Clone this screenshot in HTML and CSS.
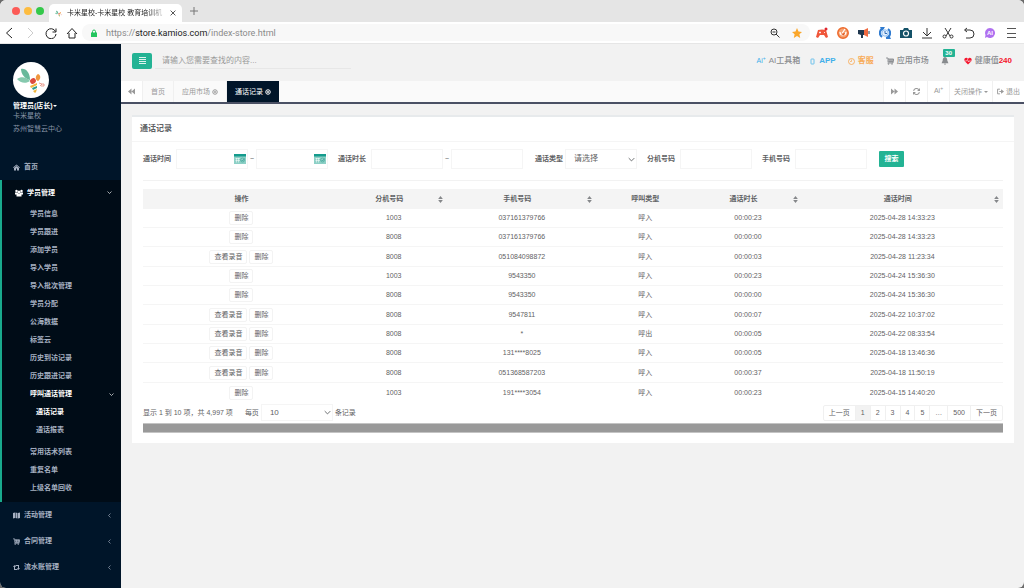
FILE: index.html
```html
<!DOCTYPE html>
<html lang="zh-CN">
<head>
  <meta charset="UTF-8" />
  <title>卡米星校-卡米星校 教育培训机构管理系统</title>
  <link rel="stylesheet" href="styles.css">
</head>
<body>

  <svg class="sprite" aria-hidden="true">
    <symbol id="bee" viewBox="0 0 36 36">
      <path d="M8 7c5-1 9 4 9 11C12 17 8 12 8 7z" fill="#68b99b"/>
      <path d="M4 17c4-3 10-2 13 2-4 3-10 2-13-2z" fill="#86c9ae"/>
      <path d="M25 12c3 1 3 5 0 7-3-1-3-5 0-7z" fill="#f0963c"/>
      <ellipse cx="20" cy="19" rx="3" ry="2.600" transform="rotate(-35 20 19)" fill="#dc4a3d"/>
      <path d="M17 24l7-3v2l-6 3z" fill="#f0b63c"/>
      <path d="M19 26l5-2v2l-4 2z" fill="#2e9c8c"/>
      <path d="M20 29l4-2-1 3-1 1z" fill="#f0b63c"/>
      <path d="M26 21l3 1-2 2M28 24h3v-2h-2" fill="none" stroke="#e58a7c" stroke-width=".8"/>
    </symbol>
    <symbol id="cart" viewBox="0 0 16 16">
      <path d="M0 2h4v8h10v2H3M4 4h11v5H5M8 4v5M12 4v5M4 6h11" fill="none" stroke="currentColor" stroke-width="1.800"/>
      <circle cx="5" cy="14" r="1.500" fill="currentColor"/><circle cx="12" cy="14" r="1.500" fill="currentColor"/>
    </symbol>
    <symbol id="sort" viewBox="0 0 8 12">
      <path d="M4 0l4 5H0zM4 12l4-5H0z" fill="#85878a"/>
    </symbol>
    <symbol id="chevron" viewBox="0 0 10 10">
      <path d="M1 3l4 4 4-4" fill="none" stroke="currentColor" stroke-width="1.300"/>
    </symbol>
    <symbol id="caret" viewBox="0 0 8 8">
      <path d="M0 2h8L4 6z" fill="currentColor"/>
    </symbol>
    <symbol id="close" viewBox="0 0 12 12">
      <circle cx="6" cy="6" r="4.500" fill="none" stroke="currentColor" stroke-width="2"/>
      <path d="M4 4l4 4M8 4l-4 4" stroke="currentColor" stroke-width="1.400"/>
    </symbol>
    <symbol id="calendar" viewBox="0 0 24 20">
      <path d="M0 0h24v20H0z" fill="#8dd0c6"/>
      <path d="M0 0h24v5H0z" fill="#159b8d"/>
      <path d="M3 9h9M3 13h9M5 8v9M9 8v9" stroke="#fff"/>
      <circle cx="17" cy="12" r="4" fill="none" stroke="#4aaa9e" stroke-width="1.400"/>
      <path d="M15 12l2 2 4-5" fill="none" stroke="#16877c"/>
    </symbol>
  </svg>

  <div class="window">

    <div class="tab-strip">
      <span class="light red"></span>
      <span class="light yellow"></span>
      <span class="light green"></span>
      <div class="browser-tab">
        <svg class="favicon"><use href="#bee"/></svg>
        <span class="browser-title">卡米星校-卡米星校 教育培训机</span>
        <button type="button" class="plain" aria-label="关闭标签页">
          <svg class="i6" viewBox="0 0 10 10"><path d="M1 1l8 8M9 1l-8 8" stroke="#444" stroke-width="1.500"/></svg>
        </button>
      </div>
      <button type="button" class="plain" aria-label="新标签页">
        <svg class="i8" viewBox="0 0 8 8"><path d="M4 0v8M0 4h8" stroke="#777"/></svg>
      </button>
    </div>

    <div class="toolbar">
      <div class="tools">
        <button type="button" class="plain" aria-label="后退"><svg class="i12" viewBox="0 0 12 12"><path d="M9 1L3.500 6 9 11" fill="none" stroke="#222"/></svg></button>
        <button type="button" class="plain" aria-label="前进"><svg class="i12" viewBox="0 0 12 12"><path d="M4 1l5 5-5 5" fill="none" stroke="#ccc"/></svg></button>
        <button type="button" class="plain" aria-label="刷新"><svg class="i12" viewBox="0 0 12 12"><path d="M10.500 4.500A5 5 0 1 0 11 7M11 1.500v3.500H7.500" fill="none" stroke="#222"/></svg></button>
        <button type="button" class="plain" aria-label="主页"><svg class="i12" viewBox="0 0 12 12"><path d="M1 7l5-5.500L11 7M3 6v5h6V6" fill="none" stroke="#222"/></svg></button>
      </div>
      <div class="address">
        <svg class="i8" viewBox="0 0 8 8"><path d="M2.500 4V2.500a1.500 1.500 0 0 1 3 0V4" fill="none" stroke="#22c55e"/><path d="M1 3.500h6V8H1z" fill="#22c55e"/></svg>
        <span class="url">https://<b>store.kamios.com</b>/index-store.html</span>
        <svg class="i10" viewBox="0 0 10 10"><circle cx="4" cy="4" r="3" fill="none" stroke="#333"/><path d="M6 6l3.500 3.500M2.500 4h3" stroke="#333"/></svg>
        <svg class="i10" viewBox="0 0 10 10"><path d="M5 0l1.500 3.500L10 4 7.400 6.300 8.200 10 5 8 1.800 10l.8-3.700L0 4l3.500-.5z" fill="#fba72b"/></svg>
      </div>
      <div class="tools">
        <svg class="i12" viewBox="0 0 12 12"><path d="M2 3q4-1 8 0l2 7-2 1-2-3H4l-2 3-2-1z" fill="#f0563a"/><circle cx="10" cy="2" r="1.500" fill="#e0262e"/><path d="M3 5.500h2M4 4.500v2M8 5.500h1" stroke="#fff" stroke-width=".8"/></svg>
        <svg class="i12" viewBox="0 0 12 12"><circle cx="6" cy="6" r="5.200" fill="#f6a373" stroke="#ee6a2c" stroke-width="1.500"/><path d="M3 5a3 3 0 1 0 6 0M5 6.500l3-4.500" fill="none" stroke="#fff" stroke-width="1.200"/><path d="M4 7l4-1-1 2.500z" fill="#e2571e"/></svg>
        <svg class="i12" viewBox="0 0 12 12"><path d="M0 3h6v5H5v3H3V8L0 7z" fill="#20384f"/><path d="M6 3l4-2v9L6 8z" fill="#f0693f"/><path d="M11 4v3" stroke="#20384f"/></svg>
        <svg class="i12" viewBox="0 0 12 12"><path d="M3 10A5 5 0 0 1 5 1M9 2a5 5 0 0 1-2 9" fill="none" stroke="#2f7bd0" stroke-width="2"/><path d="M1 0h5L3 4zM12 12H7l3-4z" fill="#2f7bd0"/><circle cx="6" cy="6" r="3.200" fill="#e4f0fc" stroke="#8bbcf0"/><path d="M6 4v2.500h2" fill="none" stroke="#2f6db8"/></svg>
        <svg class="i12" viewBox="0 0 12 12"><path d="M0 3h3l1-2h4l1 2h3v8H0z" fill="#145268"/><circle cx="6" cy="6.500" r="2.500" fill="none" stroke="#fff" stroke-width="1.200"/></svg>
        <svg class="i12" viewBox="0 0 12 12"><path d="M6 1v8M2 5l4 4 4-4M1 11h10" fill="none" stroke="#333"/></svg>
        <svg class="i12" viewBox="0 0 12 12"><path d="M3 1l5 8M9 1L4 9" stroke="#333"/><circle cx="2.500" cy="9.500" r="1.500" fill="none" stroke="#333"/><circle cx="9.500" cy="9.500" r="1.500" fill="none" stroke="#333"/></svg>
        <svg class="i12" viewBox="0 0 12 12"><path d="M4 1L1.500 3 4 5M2 3h5a4 4 0 0 1 0 8H3" fill="none" stroke="#333"/></svg>
        <svg class="i12" viewBox="0 0 12 12"><path d="M6 1a5 5 0 1 1-3 9l-2 1 .5-3A5 5 0 0 1 6 1z" fill="#b070f0"/><text x="6" y="8" text-anchor="middle" class="chat-label">AI</text></svg>
        <svg class="i12" viewBox="0 0 12 12"><path d="M2 1.500h9M2 6.500h9M2 10.500h9" stroke="#555"/></svg>
      </div>
    </div>

    <div class="page">

      <aside class="sidebar">
        <div class="profile">
          <svg class="avatar"><use href="#bee"/></svg>
          <a href="#" class="user">管理员(店长)<svg class="i4"><use href="#caret"/></svg></a>
          <span>卡米星校</span>
          <span class="campus">苏州智慧云中心</span>
        </div>
        <nav>
          <a href="#" class="item"><svg class="i7" viewBox="0 0 14 14"><path d="M7 1l7 6-1 1-6-5-6 5-1-1zM2 8l5-4 5 4v5H8V9H6v4H2z" fill="currentColor"/></svg>首页</a>
          <div class="section">
            <a href="#" class="item on"><svg class="i8" viewBox="0 0 16 16"><circle cx="3" cy="4" r="2.500" fill="currentColor"/><circle cx="13" cy="4" r="2.500" fill="currentColor"/><circle cx="8" cy="6" r="3" fill="currentColor"/><path d="M0 7h5l3 3 3-3h5v4h-3v4H3v-4H0z" fill="currentColor"/></svg>学员管理<svg class="i5 arrow"><use href="#chevron"/></svg></a>
            <a href="#" class="sub">学员信息</a>
            <a href="#" class="sub">学员跟进</a>
            <a href="#" class="sub">添加学员</a>
            <a href="#" class="sub">导入学员</a>
            <a href="#" class="sub">导入批次管理</a>
            <a href="#" class="sub">学员分配</a>
            <a href="#" class="sub">公海数据</a>
            <a href="#" class="sub">标签云</a>
            <a href="#" class="sub">历史到访记录</a>
            <a href="#" class="sub">历史跟进记录</a>
            <a href="#" class="sub on">呼叫通话管理<svg class="i5 arrow"><use href="#chevron"/></svg></a>
            <div class="third">
              <a href="#" class="sub on">通话记录</a>
              <a href="#" class="sub">通话报表</a>
            </div>
            <a href="#" class="sub">常用话术列表</a>
            <a href="#" class="sub">重复名单</a>
            <a href="#" class="sub">上级名单回收</a>
          </div>
          <a href="#" class="item"><svg class="i7" viewBox="0 0 14 14"><path d="M0 2l4-1v11l-4 1zM5 1l4 1v11l-4-1zM10 2l4-1v11l-4 1z" fill="currentColor"/></svg>活动管理<svg class="i5 arrow left"><use href="#chevron"/></svg></a>
          <a href="#" class="item"><svg class="i7"><use href="#cart"/></svg>合同管理<svg class="i5 arrow left"><use href="#chevron"/></svg></a>
          <a href="#" class="item"><svg class="i7" viewBox="0 0 14 14"><path d="M3 12V5M3 11h6M11 2v7M5 3h6" stroke="currentColor" stroke-width="2"/><path d="M0 6l3-4 3 4zM8 8l3 4 3-4z" fill="currentColor"/></svg>流水账管理<svg class="i5 arrow left"><use href="#chevron"/></svg></a>
        </nav>
      </aside>

      <main>
        <header class="topbar">
          <button type="button" class="toggle" aria-label="菜单"><svg class="i7" viewBox="0 0 7 7"><path d="M0 .5h7M0 2.500h7M0 4.500h7M0 6.500h7" stroke="#fff" stroke-opacity=".85"/></svg></button>
          <input type="text" class="search" placeholder="请输入您需要查找的内容..." aria-label="查找">
          <nav class="links">
            <a href="#"><span class="ai-mark blue">Ai<sup>+</sup></span>AI工具箱</a>
            <a href="#" class="blue bold app"><svg class="i7" viewBox="0 0 14 14"><rect x="4" y="2" width="6" height="10" rx="1" fill="none" stroke="currentColor" stroke-width="1.500"/></svg>APP</a>
            <a href="#" class="orange bold"><svg class="i7" viewBox="0 0 14 14"><circle cx="7" cy="7" r="6" fill="none" stroke="currentColor" stroke-width="1.800"/><path d="M7 3v4H4" fill="none" stroke="currentColor" stroke-width="1.500"/></svg>客服</a>
            <a href="#"><svg class="i8"><use href="#cart"/></svg>应用市场</a>
            <a href="#" class="bell" aria-label="消息"><svg class="i8" viewBox="0 0 14 14"><path d="M7 0c3 1 4 3 4 6l2 5H1l2-5c0-3 1-5 4-6zM5 12h4l-2 2z" fill="currentColor"/></svg><span class="badge">30</span></a>
            <a href="#"><svg class="i8" viewBox="0 0 16 16"><path d="M8 15L1 8C-1 3 5-1 8 4c3-5 9-1 7 4z" fill="#f5152d"/><path d="M0 8h5l2-3 2 5 1-2h6" fill="none" stroke="#f2f2f2" stroke-width="1.200"/></svg><span>健康值<b class="score">240</b></span></a>
          </nav>
        </header>

        <div class="tabs">
          <button type="button" class="cell arrows" aria-label="向左"><svg class="i7" viewBox="0 0 12 12"><path d="M6 1v10L0 6zM12 1v10L6 6z" fill="currentColor"/></svg></button>
          <a href="#" class="cell">首页</a>
          <a href="#" class="cell">应用市场<svg class="i6"><use href="#close"/></svg></a>
          <a href="#" class="cell current">通话记录<svg class="i6"><use href="#close"/></svg></a>
          <div class="tabs-right">
            <button type="button" class="cell arrows" aria-label="向右"><svg class="i7" viewBox="0 0 12 12"><path d="M0 1v10l6-5zM6 1v10l6-5z" fill="currentColor"/></svg></button>
            <button type="button" class="cell arrows" aria-label="刷新"><svg class="i7" viewBox="0 0 12 12"><path d="M1 5a5 5 0 0 1 9-2M11 7a5 5 0 0 1-9 2" fill="none" stroke="currentColor" stroke-width="1.800"/><path d="M12 0v5H7zM0 12V7h5z" fill="currentColor"/></svg></button>
            <button type="button" class="cell arrows"><span class="ai-mark">Ai<sup>+</sup></span></button>
            <button type="button" class="cell ops">关闭操作<svg class="i4"><use href="#caret"/></svg></button>
            <a href="#" class="cell exit"><svg class="i7" viewBox="0 0 12 12"><path d="M5 2H1v8h4M4 6h4" fill="none" stroke="currentColor" stroke-width="1.600"/><path d="M7 2l5 4-5 4z" fill="currentColor"/></svg>退出</a>
          </div>
        </div>

        <section class="card">
          <h1>通话记录</h1>
          <form class="filters">
            <div class="field">
              <label for="time-from">通话时间</label>
              <input type="text" id="time-from" class="date"><svg class="cal"><use href="#calendar"/></svg>
              <span class="tilde">~</span>
              <input type="text" class="date" aria-label="通话时间至"><svg class="cal"><use href="#calendar"/></svg>
            </div>
            <div class="field">
              <label for="len-from">通话时长</label>
              <input type="text" id="len-from">
              <span class="tilde">~</span>
              <input type="text" aria-label="通话时长至">
            </div>
            <div class="field type">
              <label for="type">通话类型</label>
              <select id="type"><option>请选择</option><option>呼入</option><option>呼出</option></select><svg class="i7 drop"><use href="#chevron"/></svg>
            </div>
            <div class="field">
              <label for="ext">分机号码</label>
              <input type="text" id="ext">
            </div>
            <div class="field">
              <label for="phone">手机号码</label>
              <input type="text" id="phone">
            </div>
            <button type="submit" class="submit">搜索</button>
          </form>

          <table>
            <colgroup>
              <col class="c-op"><col class="c-ext"><col class="c-phone"><col class="c-type"><col class="c-ext"><col>
            </colgroup>
            <thead>
              <tr>
                <th>操作</th>
                <th><div class="sortable"><span>分机号码</span><svg><use href="#sort"/></svg></div></th>
                <th><div class="sortable"><span>手机号码</span><svg><use href="#sort"/></svg></div></th>
                <th>呼叫类型</th>
                <th><div class="sortable"><span>通话时长</span><svg><use href="#sort"/></svg></div></th>
                <th><div class="sortable"><span>通话时间</span><svg><use href="#sort"/></svg></div></th>
              </tr>
            </thead>
            <tbody>
              <tr><td><button type="button">删除</button></td><td>1003</td><td>037161379766</td><td>呼入</td><td>00:00:23</td><td>2025-04-28 14:33:23</td></tr>
              <tr><td><button type="button">删除</button></td><td>8008</td><td>037161379766</td><td>呼入</td><td>00:00:00</td><td>2025-04-28 14:33:23</td></tr>
              <tr><td><button type="button">查看录音</button><button type="button">删除</button></td><td>8008</td><td>051084098872</td><td>呼入</td><td>00:00:03</td><td>2025-04-28 11:23:34</td></tr>
              <tr><td><button type="button">删除</button></td><td>1003</td><td>9543350</td><td>呼入</td><td>00:00:23</td><td>2025-04-24 15:36:30</td></tr>
              <tr><td><button type="button">删除</button></td><td>8008</td><td>9543350</td><td>呼入</td><td>00:00:00</td><td>2025-04-24 15:36:30</td></tr>
              <tr><td><button type="button">查看录音</button><button type="button">删除</button></td><td>8008</td><td>9547811</td><td>呼入</td><td>00:00:07</td><td>2025-04-22 10:37:02</td></tr>
              <tr><td><button type="button">查看录音</button><button type="button">删除</button></td><td>8008</td><td>*</td><td>呼出</td><td>00:00:05</td><td>2025-04-22 08:33:54</td></tr>
              <tr><td><button type="button">查看录音</button><button type="button">删除</button></td><td>8008</td><td>131****8025</td><td>呼入</td><td>00:00:05</td><td>2025-04-18 13:46:36</td></tr>
              <tr><td><button type="button">查看录音</button><button type="button">删除</button></td><td>8008</td><td>051368587203</td><td>呼入</td><td>00:00:37</td><td>2025-04-18 11:50:19</td></tr>
              <tr><td><button type="button">删除</button></td><td>1003</td><td>191****3054</td><td>呼入</td><td>00:00:23</td><td>2025-04-15 14:40:20</td></tr>
            </tbody>
          </table>

          <div class="table-foot">
            <span class="info">显示 1 到 10 项，共 4,997 项</span>
            <label for="size">每页</label>
            <select id="size"><option>10</option><option>25</option><option>50</option></select><svg class="i7 drop"><use href="#chevron"/></svg>
            <span class="unit">条记录</span>
            <div class="pager">
              <a href="#" class="wide">上一页</a><a href="#" class="active">1</a><a href="#">2</a><a href="#">3</a><a href="#">4</a><a href="#">5</a><span>…</span><a href="#">500</a><a href="#" class="wide">下一页</a>
            </div>
          </div>
          <div class="scrollbar"></div>
        </section>
      </main>
    </div>
  </div>

</body>
</html>
```
FILE: styles.css
```css
* {
  box-sizing: border-box;
}

body {
  margin: 0;
  background: #6b6b6b;
  color: #5f6264;
  font-family: "Liberation Sans", "Noto Sans CJK SC", sans-serif;
  font-size: 7px;
  line-height: 10px;
}

a {
  color: inherit;
  text-decoration: none;
}

button,
input,
select {
  margin: 0;
  padding: 0;
  border: 0;
  color: inherit;
  font: inherit;
}

svg {
  flex: none;
  display: block;
}

.sprite { position: absolute; width: 0; height: 0; }
.i4 { width: 4px; height: 4px; }
.i5 { width: 5px; height: 5px; }
.i6 { width: 6px; height: 6px; }
.i7 { width: 7px; height: 7px; }
.i8 { width: 8px; height: 8px; }
.i10 { width: 10px; height: 10px; }
.i12 { width: 12px; height: 12px; }

.window {
  display: flex;
  flex-direction: column;
  min-height: 100vh;
  border-radius: 6px;
  overflow: hidden;
  background: #f2f2f2;
}

/* browser frame */
.tab-strip {
  display: flex;
  align-items: center;
  height: 22px;
  padding-left: 12px;
  background: #e5e5e5;
}

.light {
  width: 8px;
  height: 8px;
  margin-right: 4px;
  border-radius: 50%;
}

.red { background: #fc5b57; }
.yellow { background: #fdbc40; }
.green { background: #34c84a; }

.browser-tab {
  display: flex;
  align-items: center;
  align-self: flex-end;
  width: 133px;
  height: 18px;
  margin: 0 8px 0 1px;
  padding: 0 6px 0 5px;
  border-radius: 5px 5px 0 0;
  background: #fff;
}

.favicon {
  width: 9px;
  height: 9px;
  margin-right: 4px;
}

.browser-title {
  flex: 1;
  margin-right: 4px;
  color: #222;
  white-space: nowrap;
  mask-image: linear-gradient(to right, #000 82%, transparent);
}

.plain {
  background: none;
}

.toolbar {
  display: flex;
  align-items: center;
  height: 22px;
  padding: 0 7px 0 3px;
  border-bottom: 1px solid #e6e6e6;
  background: #fff;
}

.tools {
  display: flex;
  gap: 9px;
}

.chat-label {
  fill: #fff;
  font-size: 6px;
  font-weight: bold;
}

.address {
  display: flex;
  flex: 1;
  align-items: center;
  gap: 12px;
  height: 17px;
  margin: 0 6px 0 4px;
  padding: 0 8px;
  border-radius: 8px;
  background: #f8f8f8;
}

.url {
  flex: 1;
  margin-left: -4px;
  color: #8a8a8a;
  font-family: Roboto, sans-serif;
  font-size: 9px;
}

.url b {
  color: #222;
  font-weight: normal;
}

.page {
  display: flex;
  flex: 1;
}

/* sidebar */
.sidebar {
  width: 121px;
  background: #001529;
  color: #a7b1c2;
}

.profile {
  display: flex;
  flex-direction: column;
  align-items: flex-start;
  height: 110px;
  padding: 18px 13px 0;
  color: #8995a8;
}

.avatar {
  width: 36px;
  height: 36px;
  border-radius: 50%;
  background: #fff;
}

.user {
  display: flex;
  align-items: center;
  margin-top: 3px;
  color: #fff;
  font-weight: bold;
}

.campus {
  margin-top: 3px;
}

.item {
  display: flex;
  align-items: center;
  gap: 4px;
  height: 26px;
  padding: 0 9px 0 13px;
  font-weight: bold;
}

.section {
  padding-bottom: 5px;
  border-left: 2px solid #19aa8d;
  background: #000c17;
}

.section .item {
  height: 25px;
}

.sub {
  display: flex;
  align-items: center;
  height: 18px;
  padding: 0 7px 0 28px;
  font-weight: bold;
}

.on {
  color: #fff;
}

.third {
  padding: 0 0 4px 6px;
}

.arrow {
  margin-left: auto;
}

.left {
  transform: rotate(90deg);
}

/* header */
main {
  flex: 1;
  min-width: 0;
}

.topbar {
  display: flex;
  align-items: center;
  height: 37px;
  padding: 0 12px 4px 11px;
}

.toggle {
  display: flex;
  align-items: center;
  justify-content: center;
  width: 20px;
  height: 16px;
  border-radius: 2px;
  background: #23b394;
}

.search {
  width: 196px;
  height: 16px;
  margin: 1px 0 0 3px;
  padding-left: 7px;
  border-bottom: 1px solid #e7e7e7;
  background: none;
  font-size: 8px;
}

.search::placeholder {
  color: #999;
}

.links {
  display: flex;
  gap: 12px;
  margin: 2px 0 0 auto;
  color: #888b8e;
  font-size: 8px;
  font-weight: 500;
}

.links a {
  display: flex;
  align-items: center;
  gap: 3px;
}

.links .app {
  margin-left: -3px;
}

.ai-mark {
  font-size: 7px;
}

.ai-mark sup {
  font-size: 5px;
  line-height: 1;
}

.blue { color: #41b0ea; }
.orange { color: #f8ac59; }
.bold { font-weight: bold; }
.score { color: #f5152d; }

.links .bell {
  position: relative;
  margin-right: 3px;
}

.badge {
  position: absolute;
  top: -7px;
  left: 2px;
  width: 12px;
  height: 8px;
  border-radius: 1px;
  background: #23b394;
  color: #fff;
  font-size: 6px;
  font-weight: bold;
  line-height: 8px;
  text-align: center;
}

.tabs {
  display: flex;
  height: 23px;
  border-bottom: 2px solid #4a5064;
  background: #fafafa;
  color: #999;
}

.cell {
  display: flex;
  align-items: center;
  justify-content: center;
  gap: 2px;
  padding: 0 8px;
  border-right: 1px solid #f0f0f0;
  background: none;
}

.arrows {
  width: 22px;
  padding: 0;
  background: #fff;
}

.current {
  border: 0;
  background: #001529;
  color: #fff;
}

.tabs-right {
  display: flex;
  margin-left: auto;
  background: #fff;
}

.tabs-right .cell {
  border-right: 0;
  border-left: 1px solid #f0f0f0;
}

.tabs-right .ops {
  padding: 0 4px;
}

.tabs-right .exit {
  padding: 0 4px;
}

/* call records */
.card {
  margin: 11px 10px 0 11px;
  padding-bottom: 10px;
  border-top: 2px solid #e7eaec;
  background: #fff;
}

h1 {
  margin: 0;
  padding: 7px 8px;
  border-bottom: 1px solid #f5f5f5;
  font-size: 8px;
  font-weight: bold;
  line-height: 10px;
}

.filters {
  display: flex;
  flex-wrap: wrap;
  align-items: center;
  gap: 10px;
  margin: 0 11px 8px;
  padding: 7px 0 11px;
  border-bottom: 1px solid #f2f2f2;
}

.field {
  display: flex;
  align-items: center;
}

.field label {
  margin-right: 5px;
  font-weight: bold;
}

.field input,
select {
  width: 72px;
  height: 20px;
  border: 1px solid #f5f5f5;
  background: #fff;
}

.cal {
  width: 12px;
  height: 10px;
  margin: 0 2px 0 -14px;
}

.tilde {
  width: 8px;
  text-align: center;
}

.type {
  margin-left: 2px;
}

.field.type label {
  margin-right: 2px;
}

select {
  padding-left: 8px;
  appearance: none;
  font-size: 8px;
}

.drop {
  margin: 0 2px 0 -9px;
  pointer-events: none;
}

.submit {
  width: 25px;
  height: 16px;
  margin-left: 2px;
  border-radius: 1px;
  background: #23b394;
  color: #fff;
  font-weight: bold;
}

table {
  width: calc(100% - 22px);
  margin: 0 11px;
  border-collapse: separate;
  border-spacing: 0;
  table-layout: fixed;
  text-align: center;
}

.c-op { width: 22.9%; }
.c-ext { width: 12.5%; }
.c-phone { width: 17.3%; }
.c-type { width: 11.4%; }

th {
  height: 20px;
  padding: 0;
  background: #f4f4f4;
}

.sortable {
  display: flex;
  align-items: center;
}

.sortable span {
  flex: 1;
}

.sortable svg {
  width: 5px;
  height: 7px;
  margin-right: 4px;
}

td {
  height: 19px;
  padding: 0;
  border-bottom: 1px solid #f5f5f5;
}

tr:nth-child(3n) td {
  height: 20px;
}

tr:last-child td {
  border-bottom: 0;
}

td button {
  height: 14px;
  margin: 0 1px;
  padding: 0 4px;
  border: 1px solid #f3f3f3;
  border-radius: 2px;
  background: #fff;
  line-height: 12px;
  vertical-align: middle;
}

.table-foot {
  display: flex;
  align-items: center;
  margin: 2px 11px;
}

.info {
  margin-right: 12px;
}

.table-foot select {
  height: 17px;
  margin-left: 2px;
}

.unit {
  margin-left: 2px;
}

.pager {
  display: flex;
  margin-left: auto;
  border: 1px solid #f0f0f0;
  border-radius: 2px;
}

.pager > * {
  padding: 2px 5px;
  border-left: 1px solid #f0f0f0;
}

.pager .wide:first-child {
  border-left: 0;
}

.pager .active {
  background: #f2f2f2;
}

.scrollbar {
  height: 10px;
  margin: 0 11px;
  border: 1px solid #c4c4c4;
  border-width: 1px 0;
  background: #999;
}
```
